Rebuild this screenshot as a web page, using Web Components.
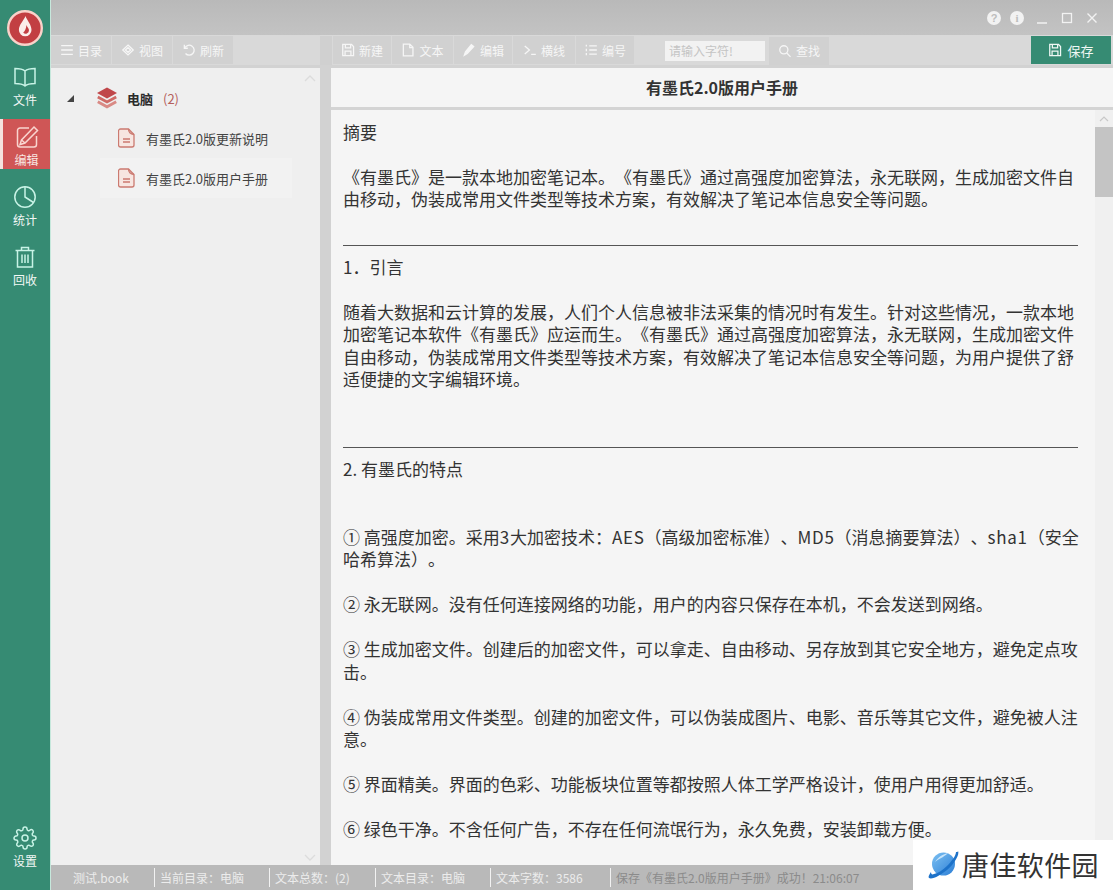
<!DOCTYPE html>
<html lang="zh">
<head>
<meta charset="utf-8">
<title>有墨氏</title>
<style>
    html, body {
        margin: 0;
        padding: 0;
        height: 890px;
        overflow: hidden;
        font-family: "Noto Sans CJK SC", "Open Sans", sans-serif;
        font-kerning: none;
        text-spacing-trim: space-all;
    }
</style>
</head>
<body>
<app-shell>
    <side-nav slot="nav">
        <nav-item icon="book">文件</nav-item>
        <nav-item icon="edit" active>编辑</nav-item>
        <nav-item icon="pie">统计</nav-item>
        <nav-item icon="trash">回收</nav-item>
        <nav-item icon="gear" slot="bottom">设置</nav-item>
    </side-nav>
    <title-bar slot="title"></title-bar>
    <tool-bar slot="tools">
        <tool-btn icon="menu" w="60">目录</tool-btn>
        <tool-btn icon="cube" w="60">视图</tool-btn>
        <tool-btn icon="undo" w="60">刷新</tool-btn>
        <tool-btn icon="save" w="58" slot="right">新建</tool-btn>
        <tool-btn icon="file" w="61" slot="right">文本</tool-btn>
        <tool-btn icon="pencil" w="58" slot="right">编辑</tool-btn>
        <tool-btn icon="term" w="62" slot="right">横线</tool-btn>
        <tool-btn icon="list" w="58" slot="right">编号</tool-btn>
        <search-box slot="right"></search-box>
        <tool-btn icon="save" w="80" primary slot="save">保存</tool-btn>
    </tool-bar>
    <tree-pane slot="tree">
        <tree-root count="(2)">电脑</tree-root>
        <tree-item>有墨氏2.0版更新说明</tree-item>
        <tree-item selected>有墨氏2.0版用户手册</tree-item>
    </tree-pane>
    <doc-pane slot="doc" heading="有墨氏2.0版用户手册">
        <doc-para>摘要</doc-para>
        <doc-para>《有墨氏》是一款本地加密笔记本。《有墨氏》通过高强度加密算法，永无联网，生成加密文件自<br>由移动，伪装成常用文件类型等技术方案，有效解决了笔记本信息安全等问题。</doc-para>
        <doc-rule></doc-rule>
        <doc-para>1．引言</doc-para>
        <doc-para gap="2">随着大数据和云计算的发展，人们个人信息被非法采集的情况时有发生。针对这些情况，一款本地<br>加密笔记本软件《有墨氏》应运而生。《有墨氏》通过高强度加密算法，永无联网，生成加密文件<br>自由移动，伪装成常用文件类型等技术方案，有效解决了笔记本信息安全等问题，为用户提供了舒<br>适便捷的文字编辑环境。</doc-para>
        <doc-rule></doc-rule>
        <doc-para gap="2">2. 有墨氏的特点</doc-para>
        <doc-para>① 高强度加密。采用<span style="letter-spacing:.7px">3</span>大加密技术：<span style="letter-spacing:.7px">AES</span>（高级加密标准）、<span style="letter-spacing:.7px">MD5</span>（消息摘要算法）、<span style="letter-spacing:.7px">sha1</span>（安全<br>哈希算法）。</doc-para>
        <doc-para>② 永无联网。没有任何连接网络的功能，用户的内容只保存在本机，不会发送到网络。</doc-para>
        <doc-para>③ 生成加密文件。创建后的加密文件，可以拿走、自由移动、另存放到其它安全地方，避免定点攻<br>击。</doc-para>
        <doc-para>④ 伪装成常用文件类型。创建的加密文件，可以伪装成图片、电影、音乐等其它文件，避免被人注<br>意。</doc-para>
        <doc-para>⑤ 界面精美。界面的色彩、功能板块位置等都按照人体工学严格设计，使用户用得更加舒适。</doc-para>
        <doc-para>⑥ 绿色干净。不含任何广告，不存在任何流氓行为，永久免费，安装卸载方便。</doc-para>
    </doc-pane>
    <status-bar slot="status">
        <status-cell w="104" pad="22">测试.book</status-cell>
        <status-cell w="115">当前目录：电脑</status-cell>
        <status-cell w="106">文本总数：(2)</status-cell>
        <status-cell w="115">文本目录：电脑</status-cell>
        <status-cell w="120">文本字数：3586</status-cell>
        <status-cell dim>保存《有墨氏2.0版用户手册》成功！21:06:07</status-cell>
    </status-bar>
</app-shell>
<site-mark></site-mark>

<script>
// icon strokes, all in a 24 box
const ICONS = {
    book: '<path d="M12 6C9.5 3.8 6 3.5 2 3.5v15c4 0 7.500.3 10 2.500 2.500-2.200 6-2.500 10-2.500v-15c-4 0-7.500.3-10 2.500zM12 6v15"/>',
    edit: '<path d="M14 3H5a2.500 2.500 0 0 0-2.500 2.500v14A2.500 2.500 0 0 0 5 22h14a2.500 2.500 0 0 0 2.500-2.500V11"/><path d="M19 2l3.500 3.500L10 18l-5 1.500L6.500 15z"/><path d="M6.500 15L10 18"/>',
    pie: '<circle cx="12" cy="12" r="10.200"/><path d="M12 1.800V12l8.500 5.500"/>',
    trash: '<path d="M2.500 5.500h19M8.500 5.500V2.500h7v3M4.500 5.500v16.500h15V5.500M9 9.500v8.500M12 9.500v8.500M15 9.500v8.500"/>',
    gear: '<circle cx="12" cy="12" r="3"/><path d="M19.400 15a1.650 1.650 0 0 0 .33 1.820l.06.06a2 2 0 0 1 0 2.830 2 2 0 0 1-2.830 0l-.06-.06a1.650 1.650 0 0 0-1.820-.33 1.650 1.650 0 0 0-1 1.510V21a2 2 0 0 1-2 2 2 2 0 0 1-2-2v-.09A1.650 1.650 0 0 0 9 19.400a1.650 1.650 0 0 0-1.820.33l-.06.06a2 2 0 0 1-2.830 0 2 2 0 0 1 0-2.830l.06-.06a1.650 1.650 0 0 0 .33-1.820 1.650 1.650 0 0 0-1.510-1H3a2 2 0 0 1-2-2 2 2 0 0 1 2-2h.09A1.650 1.650 0 0 0 4.600 9a1.650 1.650 0 0 0-.33-1.820l-.06-.06a2 2 0 0 1 0-2.830 2 2 0 0 1 2.830 0l.06.06a1.650 1.650 0 0 0 1.820.33H9a1.650 1.650 0 0 0 1-1.510V3a2 2 0 0 1 2-2 2 2 0 0 1 2 2v.09a1.650 1.650 0 0 0 1 1.510 1.650 1.650 0 0 0 1.820-.33l.06-.06a2 2 0 0 1 2.830 0 2 2 0 0 1 0 2.830l-.06.06a1.650 1.650 0 0 0-.33 1.820V9a1.650 1.650 0 0 0 1.510 1H21a2 2 0 0 1 2 2 2 2 0 0 1-2 2h-.09a1.650 1.650 0 0 0-1.510 1z"/>',
    menu: '<path d="M2 4.500h20M2 12h20M2 19.500h20"/>',
    cube: '<path d="M12 3.500l9 8.500-9 8.500L3 12zM7.500 12l4.500-4 4.500 4-4.500 4z"/>',
    undo: '<path d="M5 8a8.500 8.500 0 1 1 1 10"/><path d="M4 3v6h6"/>',
    save: '<path d="M3 2.500h15l3.500 3.500v15.500H3z"/><path d="M7.500 2.500v6h9v-6M7 21.500v-7.500h10v7.500"/>',
    file: '<path d="M4 2h11l5.500 5.500V22H4zM15 2v6h5.500"/>',
    pencil: '<path d="M4 21l2-6L16 3l4 3L9 18z" fill="currentColor"/>',
    term: '<path d="M3 5l8 7-8 7M14 19.500h8"/>',
    list: '<path d="M9 5h13M9 12h13M9 19h13M4 3v3M4 10v4M4 17v4"/>',
    search: '<circle cx="10" cy="10" r="7"/><path d="M15 15.500l6.500 6.500"/>'
};
const icon = (name, size, stroke) =>
    `<svg width="${size}" height="${size}" viewBox="0 0 24 24" fill="none" stroke="currentColor" stroke-width="${stroke}">${ICONS[name]}</svg>`;

class AppShell extends HTMLElement {
    constructor() {
        super();
        this.attachShadow({mode: 'open'}).innerHTML = `
<style>
    :host { display: flex; width: 1113px; height: 890px; background: #d2d2d2; }
    #main { flex: 1; display: flex; flex-direction: column; min-width: 0; border-left: 1px solid #c6e8dc; }
    #panes { flex: 1; display: flex; min-height: 0; background: #d2d2d2; padding-top: 3px; }
    #tree { width: 269px; display: flex; }
    #doc { flex: 1; display: flex; margin-left: 11px; min-width: 0; }
    ::slotted([slot=tree]), ::slotted([slot=doc]) { flex: 1; }
</style>
<slot name="nav"></slot>
<div id="main">
    <slot name="title"></slot>
    <slot name="tools"></slot>
    <div id="panes">
        <div id="tree"><slot name="tree"></slot></div>
        <div id="doc"><slot name="doc"></slot></div>
    </div>
    <slot name="status"></slot>
</div>`;
    }
}

class SideNav extends HTMLElement {
    constructor() {
        super();
        this.attachShadow({mode: 'open'}).innerHTML = `
<style>
    :host { display: flex; flex-direction: column; width: 50px; height: 890px; background: #368b73; flex: none; }
    #logo { height: 59px; display: flex; justify-content: center; padding-top: 8px; box-sizing: border-box; }
    #items { flex: 1; display: flex; flex-direction: column; gap: 10px; }
    #bottom { padding-bottom: 20px; }
</style>
<div id="logo">
    <svg width="44" height="42" viewBox="0 0 44 42">
        <circle cx="22" cy="20" r="16.800" fill="#c23f42" stroke="#fad2ca" stroke-width="2.400"/>
        <path d="M22.500 8c1.500 4.500 6 8.500 6 14a6.300 6.300 0 0 1-12.600 0C15.900 16.500 20.800 12.500 22.500 8z" fill="#fbeeea"/>
        <path d="M23.500 17c.6 2.200 2.500 3.500 2.500 5.300a3.300 3.300 0 0 1-5.800 2.200c2-1.500 2.800-4 3.300-7.500z" fill="#c23f42"/>
    </svg>
</div>
<div id="items"><slot></slot></div>
<div id="bottom"><slot name="bottom"></slot></div>`;
    }
}

class NavItem extends HTMLElement {
    constructor() {
        super();
        this.attachShadow({mode: 'open'}).innerHTML = `
<style>
    :host { display: flex; flex-direction: column; align-items: center; height: 50px; box-sizing: border-box; padding-top: 6px; color: #c8f3e6; }
    :host([active]) { background: #cf5656; border-left: 3px solid #f5e3df; color: #f9d5cf; }
    span { color: #f2f7f5; font-size: 12px; line-height: 16px; margin-top: 3px; }
    :host([active]) span { color: #f8e6e2; }
    svg { display: block; }
</style>
${icon(this.getAttribute('icon'), 24, 1.500)}
<span><slot></slot></span>`;
    }
}

class TitleBar extends HTMLElement {
    constructor() {
        super();
        this.attachShadow({mode: 'open'}).innerHTML = `
<style>
    :host { display: flex; align-items: center; justify-content: flex-end; height: 35px; gap: 11px; padding: 0 14px 0 0; box-sizing: border-box; background: linear-gradient(#b9b9b9, #c3c3c3); color: #f2f2f2; }
    svg { display: block; }
    svg:first-of-type { transform: translateX(2px); }
</style>
<svg width="14" height="14" viewBox="0 0 14 14"><circle cx="7" cy="7" r="7" fill="currentColor"/><text x="7" y="11" text-anchor="middle" font-size="11" font-weight="700" font-family="Liberation Sans" fill="#bdbdbd">?</text></svg>
<svg width="14" height="14" viewBox="0 0 14 14"><circle cx="7" cy="7" r="7" fill="currentColor"/><text x="7" y="11" text-anchor="middle" font-size="11" font-weight="700" font-family="Liberation Serif" fill="#bdbdbd">i</text></svg>
<svg width="14" height="14" viewBox="0 0 14 14"><path d="M2 12h10" stroke="currentColor" stroke-width="1.500"/></svg>
<svg width="14" height="14" viewBox="0 0 14 14"><rect x="2.500" y="2.500" width="9" height="9" fill="none" stroke="currentColor" stroke-width="1.300"/></svg>
<svg width="14" height="14" viewBox="0 0 14 14"><path d="M2.500 2.500l9 9M11.500 2.500l-9 9" stroke="currentColor" stroke-width="1.400"/></svg>`;
    }
}

class ToolBar extends HTMLElement {
    constructor() {
        super();
        this.attachShadow({mode: 'open'}).innerHTML = `
<style>
    :host { display: flex; height: 30px; background: #d9d9d9; box-sizing: border-box; padding-top: 1px; flex: none; }
    #left { width: 269px; display: flex; gap: 1px; }
    #split { width: 12px; background: #d0d0d0; }
    #right { flex: 1; display: flex; gap: 1px; padding-left: 1px; }
    #save { padding-right: 2px; display: flex; }
</style>
<div id="left"><slot></slot></div>
<div id="split"></div>
<div id="right"><slot name="right"></slot></div>
<div id="save"><slot name="save"></slot></div>`;
    }
}

class ToolBtn extends HTMLElement {
    constructor() {
        super();
        this.attachShadow({mode: 'open'}).innerHTML = `
<style>
    :host { display: flex; align-items: center; justify-content: center; gap: 4px; height: 28px; background: #d1d1d1; color: #f6f6f6; font-size: 12px; flex: none; width: ${this.getAttribute('w')}px; }
    :host([primary]) { background: #368b73; color: #eef7f3; font-size: 13px; gap: 5px; }
    svg { display: block; flex: none; }
</style>
${icon(this.getAttribute('icon'), 14, 2.200)}
<slot></slot>`;
    }
}

class SearchBox extends HTMLElement {
    constructor() {
        super();
        this.attachShadow({mode: 'open'}).innerHTML = `
<style>
    :host { display: flex; align-items: center; margin-left: 30px; gap: 4px; }
    #input { width: 100px; height: 20px; background: #f2f2f2; color: #c4c4c4; font-size: 12px; line-height: 20px; padding-left: 4px; box-sizing: border-box; }
    #find { width: 60px; height: 28px; background: #d1d1d1; color: #f6f6f6; font-size: 12px; display: flex; align-items: center; justify-content: center; gap: 4px; }
</style>
<div id="input">请输入字符!</div>
<div id="find">${icon('search', 14, 2.200)}查找</div>`;
    }
}

class TreePane extends HTMLElement {
    constructor() {
        super();
        this.attachShadow({mode: 'open'}).innerHTML = `
<style>
    :host { display: block; background: #efefef; position: relative; box-sizing: border-box; padding-top: 10px; }
    svg { position: absolute; right: 4px; color: #dcdcdc; }
    #up { top: 6px; }
    #down { bottom: 3px; }
</style>
<slot></slot>
<svg id="up" width="12" height="8" viewBox="0 0 12 8"><path d="M1 7l5-5 5 5" fill="none" stroke="currentColor" stroke-width="1.300"/></svg>
<svg id="down" width="12" height="8" viewBox="0 0 12 8"><path d="M1 1l5 5 5-5" fill="none" stroke="currentColor" stroke-width="1.300"/></svg>`;
    }
}

class TreeRoot extends HTMLElement {
    constructor() {
        super();
        this.attachShadow({mode: 'open'}).innerHTML = `
<style>
    :host { display: flex; align-items: center; height: 40px; padding-left: 16px; font-size: 13px; color: #2b2b2b; }
    #arrow { width: 0; height: 0; border-style: solid; border-width: 0 0 7px 7px; border-color: transparent transparent #444 transparent; margin-right: 22px; }
    b { margin-left: 9px; font-weight: 700; }
    #count { margin-left: 10px; color: #b5605c; }
    svg { display: block; }
</style>
<div id="arrow"></div>
<svg width="22" height="22" viewBox="0 0 22 22">
    <path d="M11 .5l10 5.500-10 5.500L1 6z" fill="#c0474a"/>
    <path d="M1.800 10L11 15l9.200-5" fill="none" stroke="#cf6a66" stroke-width="2.800"/>
    <path d="M1.800 14.800L11 19.800l9.200-5" fill="none" stroke="#d98a85" stroke-width="2.800"/>
</svg>
<b><slot></slot></b>
<span id="count">${this.getAttribute('count')}</span>`;
    }
}

class TreeItem extends HTMLElement {
    constructor() {
        super();
        this.attachShadow({mode: 'open'}).innerHTML = `
<style>
    :host { display: flex; align-items: center; gap: 11px; height: 40px; margin-left: 49px; margin-right: 28px; padding-left: 18px; font-size: 13px; color: #444; }
    :host([selected]) { background: #f2f2f2; }
    svg { display: block; flex: none; }
</style>
<svg width="17" height="20" viewBox="0 0 17 20" fill="none" stroke="#cb7a70" stroke-width="1.300">
    <path d="M2.500 1h8l5.500 5.500V17a2 2 0 0 1-2 2H2.500a2 2 0 0 1-2-2V3a2 2 0 0 1 2-2z" fill="#f7e6e1"/>
    <path d="M10.500 1c0 3 1.500 5 5.500 5.500M5 11h7M5 14h7"/>
</svg>
<slot></slot>`;
    }
}

class DocPane extends HTMLElement {
    constructor() {
        super();
        this.attachShadow({mode: 'open'}).innerHTML = `
<style>
    :host { display: flex; flex-direction: column; background: #f5f5f5; min-width: 0; }
    h1 { margin: 0; height: 39px; line-height: 39px; text-align: center; font-size: 16px; font-weight: 700; color: #333; flex: none; }
    #bar { height: 3px; background: #d4d4d4; flex: none; }
    #body { flex: 1; display: flex; min-height: 0; overflow: hidden; }
    #page { flex: 1; padding: 10.750px 0 0 12px; min-width: 0; overflow: hidden; }
    #scroll { width: 18px; background: #f0f0f0; position: relative; flex: none; }
    #thumb { position: absolute; top: 17px; left: 0; right: 0; height: 70px; background: #c4c4c4; }
    #scroll svg { position: absolute; top: 5px; left: 4px; }
</style>
<h1>${this.getAttribute('heading')}</h1>
<div id="bar"></div>
<div id="body">
    <div id="page"><slot></slot></div>
    <div id="scroll">
        <svg width="10" height="7" viewBox="0 0 10 7"><path d="M1 6l4-4 4 4" fill="none" stroke="#c8c8c8" stroke-width="1.200"/></svg>
        <div id="thumb"></div>
    </div>
</div>`;
    }
}

class DocPara extends HTMLElement {
    constructor() {
        super();
        this.attachShadow({mode: 'open'}).innerHTML = `
<style>
    :host { display: block; font-size: 17px; line-height: 22.500px; color: #333; white-space: nowrap; margin-bottom: 22.500px; }
    :host([gap="2"]) { margin-bottom: 45px; }
</style>
<slot></slot>`;
    }
}

class DocRule extends HTMLElement {
    constructor() {
        super();
        this.attachShadow({mode: 'open'}).innerHTML = `
<style>
    :host { display: block; height: 22.500px; box-sizing: border-box; padding-top: 11.500px; margin-right: 17px; }
    div { border-top: 1px solid #555; }
</style>
<div></div>`;
    }
}

class StatusBar extends HTMLElement {
    constructor() {
        super();
        this.attachShadow({mode: 'open'}).innerHTML = `
<style>
    :host { display: flex; height: 25px; background: #b9b9b9; flex: none; align-items: center; }
</style>
<slot></slot>`;
    }
}

class StatusCell extends HTMLElement {
    constructor() {
        super();
        const w = this.getAttribute('w');
        this.attachShadow({mode: 'open'}).innerHTML = `
<style>
    :host { display: block; box-sizing: border-box; height: 19px; line-height: 19px; font-size: 12px; color: #ececec; white-space: nowrap; padding-left: ${this.getAttribute('pad') || 5}px; ${w ? `width: ${w}px; border-right: 1px solid #f2f2f2; flex: none;` : ''} }
    :host([dim]) { color: #8b8b8b; }
</style>
<slot></slot>`;
    }
}

class SiteMark extends HTMLElement {
    constructor() {
        super();
        this.attachShadow({mode: 'open'}).innerHTML = `
<style>
    :host { position: absolute; left: 913px; top: 840px; width: 200px; height: 50px; background: #fff; display: flex; align-items: center; padding-left: 15px; box-sizing: border-box; gap: 3px; font-size: 27px; letter-spacing: 0.400px; color: #333; }
    svg { display: block; flex: none; }
    span { line-height: 50px; white-space: nowrap; }
</style>
<svg width="31" height="32" viewBox="0 0 31 32">
    <defs><linearGradient id="g" x1="0" y1="0" x2="1" y2="1"><stop offset="0" stop-color="#7cc0f2"/><stop offset="1" stop-color="#2c7fd6"/></linearGradient></defs>
    <circle cx="15.500" cy="15" r="11.500" fill="url(#g)"/>
    <path d="M7 13c3-5 8-8 13-9-2 3-8 5-13 9z" fill="#c7e4fa"/>
    <path d="M30 2c2 4-5 14-11 19S4 31 1 29c-1-1 0-3 2-6 0 2 1 3 3 2 4-1 9-4 13-8s9-10 9-14c1 0 2 0 2-1z" fill="#1d72c9"/>
</svg>
<span>唐佳软件园</span>`;
    }
}

window.customElements.define('app-shell', AppShell);
window.customElements.define('side-nav', SideNav);
window.customElements.define('nav-item', NavItem);
window.customElements.define('title-bar', TitleBar);
window.customElements.define('tool-bar', ToolBar);
window.customElements.define('tool-btn', ToolBtn);
window.customElements.define('search-box', SearchBox);
window.customElements.define('tree-pane', TreePane);
window.customElements.define('tree-root', TreeRoot);
window.customElements.define('tree-item', TreeItem);
window.customElements.define('doc-pane', DocPane);
window.customElements.define('doc-para', DocPara);
window.customElements.define('doc-rule', DocRule);
window.customElements.define('status-bar', StatusBar);
window.customElements.define('status-cell', StatusCell);
window.customElements.define('site-mark', SiteMark);
</script>
</body>
</html>
